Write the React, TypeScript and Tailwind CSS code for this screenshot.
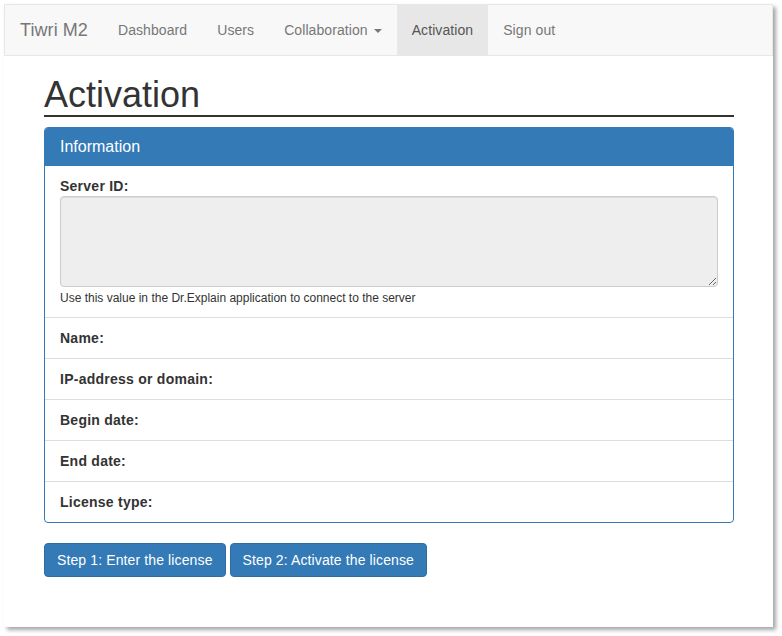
import React from 'react';

const navLinks = ['Dashboard', 'Users'];

const fields = ['Name:', 'IP-address or domain:', 'Begin date:', 'End date:', 'License type:'];

export default function App() {
  return (
    <div className="min-h-screen bg-white p-[4px] font-['Liberation_Sans',Arial,sans-serif] text-[14px] text-[#333]">
      <div className="w-[769px] h-[623px] bg-white shadow-[3px_3px_4px_rgba(0,0,0,0.35)]">
        {/* Navbar */}
        <nav className="flex h-[52px] border border-[#e7e7e7] bg-[#f8f8f8] text-[#777] tracking-[0.08px]">
          <a className="px-[15px] py-[15px] text-[18px] leading-[20px]">Tiwri M2</a>
          {navLinks.map((l) => (
            <a key={l} className="px-[15px] py-[15px] leading-[20px]">
              {l}
            </a>
          ))}
          <a className="flex items-center px-[15px] leading-[20px]">
            Collaboration
            <span className="ml-[6px] mt-[2px] h-0 w-0 border-x-[4px] border-t-[4px] border-x-transparent border-t-[#777]" />
          </a>
          <a className="bg-[#e7e7e7] px-[15px] py-[15px] leading-[20px] text-[#555]">Activation</a>
          <a className="px-[15px] py-[15px] leading-[20px]">Sign out</a>
        </nav>

        <div className="ml-[40px] w-[690px]">
          <h1 className="mt-[19px] border-b-2 border-[#333] text-[36px] leading-[40px] text-[#333]">Activation</h1>

          {/* Panel */}
          <div className="mt-[10px] overflow-hidden rounded-[4px] border border-[#337ab7]">
            <div className="bg-[#337ab7] px-[15px] py-[10px] text-[16px] leading-[18px] text-white">Information</div>
            <div className="px-[15px] pt-[10px] pb-[10px]">
              <div className="font-bold leading-[20px] tracking-[0.25px]">Server ID:</div>
              <textarea
                readOnly
                className="block h-[91px] w-full rounded-[4px] border border-[#ccc] bg-[#eee] px-[12px] py-[6px] shadow-[inset_0_1px_1px_rgba(0,0,0,0.075)] outline-none"
              />
              <div className="mt-[3px] text-[12px] leading-[17px] text-[#333]">
                Use this value in the Dr.Explain application to connect to the server
              </div>
            </div>
            {fields.map((f) => (
              <div
                key={f}
                className="border-t border-[#ddd] px-[15px] py-[10px] font-bold leading-[20px] tracking-[0.25px]"
              >
                {f}
              </div>
            ))}
          </div>

          <div className="mt-[20px] flex gap-[4px] tracking-[0.12px]">
            <button className="h-[34px] rounded-[4px] border border-[#2e6da4] bg-[#337ab7] px-[12px] leading-[20px] text-white">
              Step 1: Enter the license
            </button>
            <button className="h-[34px] rounded-[4px] border border-[#2e6da4] bg-[#337ab7] px-[12px] leading-[20px] text-white">
              Step 2: Activate the license
            </button>
          </div>
        </div>
      </div>
    </div>
  );
}
